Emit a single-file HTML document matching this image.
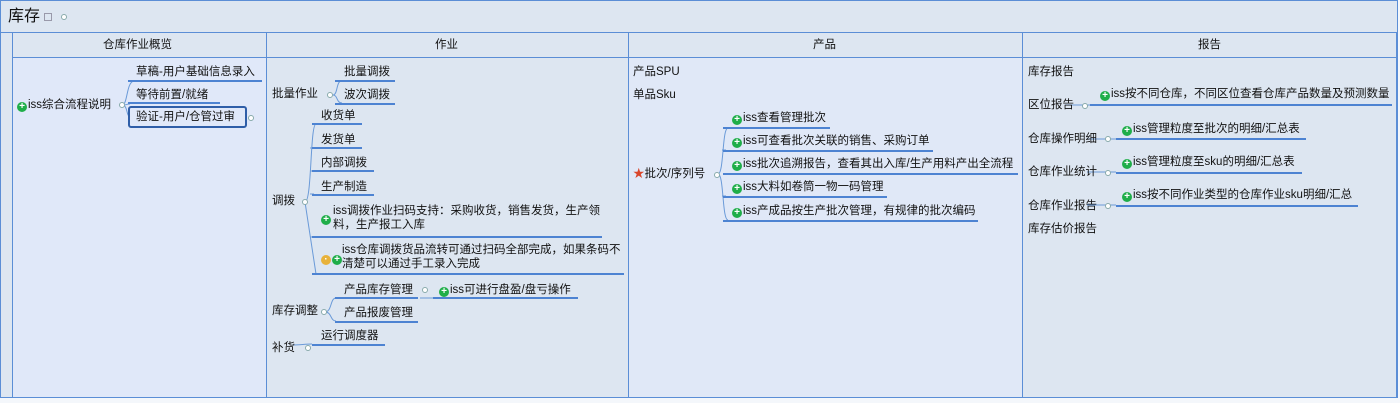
<!DOCTYPE html>
<html><head><meta charset="utf-8"><style>
body{margin:0;width:1400px;height:403px;background:#f4f7fb;position:relative;overflow:hidden;font-family:"Liberation Sans","Noto Sans CJK SC",sans-serif;color:#111}
.a{position:absolute}
.t{position:absolute;font-size:11.5px;line-height:14px;white-space:nowrap}
.u{position:absolute;height:0;border-top:2px solid #4d83d2}
.g{display:inline-block;width:10px;height:10px;border-radius:50%;background:#1fae49;color:#fff;font-size:10px;line-height:10px;text-align:center;font-weight:bold;vertical-align:-1px;margin-right:1px}
.v{position:absolute;width:0;border-left:1px solid #5b8ed6}
.c{position:absolute;width:4px;height:4px;border:1px solid #8aa;border-radius:50%;background:#fff}
</style></head><body>
<div class="a" style="left:0;top:0;width:1398px;height:398px;background:#dde6f1;border:1px solid #5b8ed6;box-sizing:border-box"></div>
<div class="a" style="left:13px;top:58px;width:253px;height:339px;background:#e0e8f9"></div>
<div class="a" style="left:628px;top:58px;width:394px;height:339px;background:#e0e8f7"></div>
<div class="a" style="left:0;top:32px;width:1398px;border-top:1px solid #5b8ed6"></div>
<div class="a" style="left:12px;top:57px;width:1384px;border-top:1px solid #5b8ed6"></div>
<div class="v" style="left:12px;top:32px;height:366px"></div>
<div class="v" style="left:266px;top:32px;height:366px"></div>
<div class="v" style="left:628px;top:32px;height:366px"></div>
<div class="v" style="left:1022px;top:32px;height:366px"></div>
<div class="v" style="left:1396px;top:32px;height:366px"></div>
<div class="t" style="left:8px;top:7px;font-size:16px;line-height:19px">库存</div>
<div class="a" style="left:44px;top:13px;width:6px;height:6px;border:1px solid #99a"></div>
<div class="c" style="left:61px;top:14px"></div>
<div class="t" style="left:103px;top:38px">仓库作业概览</div>
<div class="t" style="left:435px;top:38px">作业</div>
<div class="t" style="left:813px;top:38px">产品</div>
<div class="t" style="left:1198px;top:38px">报告</div>
<svg class="a" style="left:0;top:0" width="1400" height="403" fill="none" stroke="#6a9ad8" stroke-width="1">
<path d="M122 105 C128 105 126 82 134 81 M122 105 C128 105 126 104 130 104 M122 105 C128 105 126 116 130 117"/>
<path d="M333 95 C338 95 336 80 342 81 M333 95 C338 95 336 103 342 103"/>
<path d="M305 202 C312 202 310 124 316 124 M305 202 L316 274 M310 148 h4 M310 171 h4 M310 194 h4 M310 237 h4"/>
<path d="M325 312 C332 312 330 298 336 298 M325 312 C332 312 330 321 336 321 M420 298 h14"/>
<path d="M292 345 C300 345 305 344 312 344"/>
<path d="M718 174 C724 174 722 128 728 128 M718 174 C724 174 722 220 728 220 M722 150 h4 M722 196 h4"/>
<path d="M1065 105 h25 M1087 139 h29 M1087 172 h29 M1087 205 h29"/>
</svg>
<div class="t" style="left:17px;top:98px"><span class="g">+</span>iss综合流程说明</div>
<div class="c" style="left:119px;top:102px"></div>
<div class="t" style="left:136px;top:65px">草稿-用户基础信息录入</div><div class="u" style="left:128px;top:80px;width:134px"></div>
<div class="t" style="left:136px;top:88px">等待前置/就绪</div><div class="u" style="left:128px;top:102px;width:92px"></div>
<div class="a" style="left:128px;top:106px;width:119px;height:22px;border:2px solid #2f5ea8;border-radius:3px;box-sizing:border-box"></div>
<div class="t" style="left:136px;top:110px">验证-用户/仓管过审</div>
<div class="c" style="left:248px;top:115px"></div>
<div class="t" style="left:272px;top:87px">批量作业</div><div class="c" style="left:327px;top:92px"></div>
<div class="t" style="left:344px;top:65px">批量调拨</div><div class="u" style="left:335px;top:80px;width:60px"></div>
<div class="t" style="left:344px;top:88px">波次调拨</div><div class="u" style="left:335px;top:103px;width:60px"></div>
<div class="t" style="left:321px;top:109px">收货单</div><div class="u" style="left:312px;top:123px;width:50px"></div>
<div class="t" style="left:321px;top:133px">发货单</div><div class="u" style="left:312px;top:147px;width:50px"></div>
<div class="t" style="left:321px;top:156px">内部调拨</div><div class="u" style="left:312px;top:170px;width:62px"></div>
<div class="t" style="left:321px;top:180px">生产制造</div><div class="u" style="left:312px;top:194px;width:62px"></div>
<div class="t" style="left:321px;top:211px"><span class="g">+</span></div>
<div class="t" style="left:333px;top:204px">iss调拨作业扫码支持：采购收货，销售发货，生产领<br>料，生产报工入库</div><div class="u" style="left:312px;top:236px;width:290px"></div>
<div class="t" style="left:321px;top:251px"><span class="g" style="background:#e8b23a">·</span><span class="g">+</span></div>
<div class="t" style="left:342px;top:243px">iss仓库调拨货品流转可通过扫码全部完成，如果条码不<br>清楚可以通过手工录入完成</div><div class="u" style="left:312px;top:273px;width:312px"></div>
<div class="t" style="left:272px;top:194px">调拨</div><div class="c" style="left:302px;top:199px"></div>
<div class="t" style="left:344px;top:283px">产品库存管理</div><div class="u" style="left:335px;top:297px;width:83px"></div>
<div class="c" style="left:422px;top:287px"></div>
<div class="t" style="left:439px;top:283px"><span class="g">+</span>iss可进行盘盈/盘亏操作</div><div class="u" style="left:433px;top:297px;width:145px"></div>
<div class="t" style="left:344px;top:306px">产品报废管理</div><div class="u" style="left:335px;top:321px;width:83px"></div>
<div class="t" style="left:272px;top:304px">库存调整</div><div class="c" style="left:321px;top:309px"></div>
<div class="t" style="left:321px;top:329px">运行调度器</div><div class="u" style="left:312px;top:344px;width:73px"></div>
<div class="t" style="left:272px;top:341px">补货</div><div class="c" style="left:305px;top:345px"></div>
<div class="t" style="left:633px;top:65px">产品SPU</div>
<div class="t" style="left:633px;top:88px">单品Sku</div>
<div class="t" style="left:633px;top:167px"><span style="color:#d9452b">★</span>批次/序列号</div><div class="c" style="left:714px;top:172px"></div>
<div class="t" style="left:732px;top:111px"><span class="g">+</span>iss查看管理批次</div><div class="u" style="left:723px;top:127px;width:107px"></div>
<div class="t" style="left:732px;top:134px"><span class="g">+</span>iss可查看批次关联的销售、采购订单</div><div class="u" style="left:723px;top:150px;width:210px"></div>
<div class="t" style="left:732px;top:157px"><span class="g">+</span>iss批次追溯报告，查看其出入库/生产用料产出全流程</div><div class="u" style="left:723px;top:173px;width:295px"></div>
<div class="t" style="left:732px;top:180px"><span class="g">+</span>iss大料如卷筒一物一码管理</div><div class="u" style="left:723px;top:196px;width:164px"></div>
<div class="t" style="left:732px;top:204px"><span class="g">+</span>iss产成品按生产批次管理，有规律的批次编码</div><div class="u" style="left:723px;top:220px;width:255px"></div>
<div class="t" style="left:1028px;top:65px">库存报告</div>
<div class="t" style="left:1028px;top:98px">区位报告</div><div class="c" style="left:1082px;top:103px"></div>
<div class="t" style="left:1100px;top:87px"><span class="g">+</span>iss按不同仓库，不同区位查看仓库产品数量及预测数量</div><div class="u" style="left:1090px;top:104px;width:302px"></div>
<div class="t" style="left:1028px;top:132px">仓库操作明细</div><div class="c" style="left:1105px;top:136px"></div>
<div class="t" style="left:1122px;top:122px"><span class="g">+</span>iss管理粒度至批次的明细/汇总表</div><div class="u" style="left:1116px;top:138px;width:190px"></div>
<div class="t" style="left:1028px;top:165px">仓库作业统计</div><div class="c" style="left:1105px;top:170px"></div>
<div class="t" style="left:1122px;top:155px"><span class="g">+</span>iss管理粒度至sku的明细/汇总表</div><div class="u" style="left:1116px;top:172px;width:186px"></div>
<div class="t" style="left:1028px;top:199px">仓库作业报告</div><div class="c" style="left:1105px;top:203px"></div>
<div class="t" style="left:1122px;top:188px"><span class="g">+</span>iss按不同作业类型的仓库作业sku明细/汇总</div><div class="u" style="left:1116px;top:205px;width:242px"></div>
<div class="t" style="left:1028px;top:222px">库存估价报告</div>
</body></html>
